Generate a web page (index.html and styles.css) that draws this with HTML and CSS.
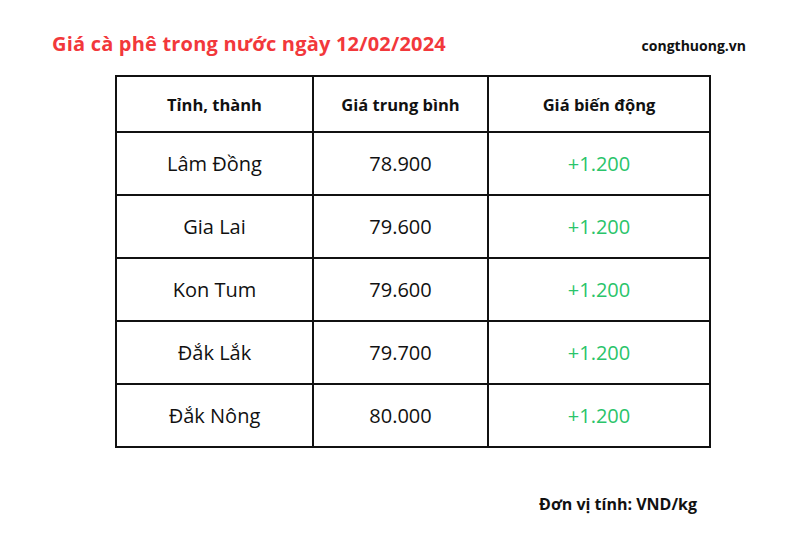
FILE: index.html
```html
<!DOCTYPE html>
<html lang="vi">
<head>
<meta charset="utf-8">
<link rel="stylesheet" href="styles.css">
</head>
<body>
<div class="page">
  <div class="top">
    <h1 class="title">Giá cà phê trong nước ngày 12/02/2024</h1>
    <div class="site">congthuong.vn</div>
  </div>
  <table class="prices">
    <colgroup><col class="c1"><col class="c2"><col class="c3"></colgroup>
    <thead>
      <tr><th>Tỉnh, thành</th><th>Giá trung bình</th><th>Giá biến động</th></tr>
    </thead>
    <tbody>
      <tr><td>Lâm Đồng</td><td>78.900</td><td class="up">+1.200</td></tr>
      <tr><td>Gia Lai</td><td>79.600</td><td class="up">+1.200</td></tr>
      <tr><td>Kon Tum</td><td>79.600</td><td class="up">+1.200</td></tr>
      <tr><td>Đắk Lắk</td><td>79.700</td><td class="up">+1.200</td></tr>
      <tr><td>Đắk Nông</td><td>80.000</td><td class="up">+1.200</td></tr>
    </tbody>
  </table>
  <div class="unit">Đơn vị tính: VND/kg</div>
</div>
</body>
</html>
```
FILE: styles.css
```css
html, body { margin: 0; padding: 0; background: #fff; }
body { font-family: "Open Sans", "Noto Sans", sans-serif; color: #111; }
.page { width: 800px; height: 533px; box-sizing: border-box; padding: 28px 0 0 0; display: flex; flex-direction: column; }
.top { display: flex; justify-content: space-between; align-items: center; padding: 0 54px 0 52px; height: 30px; }
.title { margin: 0; font-family: "Open Sans", sans-serif; font-weight: 700; font-size: 20px; color: #f2383b; letter-spacing: 0.2px; }
.site { font-weight: 700; font-size: 14px; color: #111; padding-top: 4px; }
.prices { margin: 17px 0 0 115px; width: 594px; border-collapse: collapse; table-layout: fixed; }
.c1 { width: 197px; } .c2 { width: 175px; } .c3 { width: 222px; }
.prices th, .prices td { border: 2px solid #111; text-align: center; padding: 0; }
.prices th { height: 54px; font-size: 16.5px; font-weight: 700; }
.prices td { height: 61px; font-size: 20px; font-weight: 400; }
.prices td.up { color: #2ac46a; }
.unit { align-self: flex-end; margin: 45px 103px 0 0; font-weight: 700; font-size: 16px; }
```
